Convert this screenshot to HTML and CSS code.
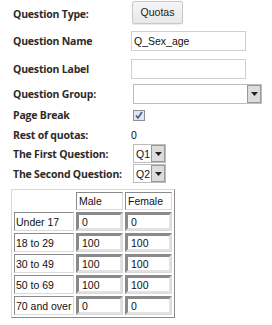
FILE: index.html
```html
<!DOCTYPE html>
<html>
<head>
<meta charset="utf-8">
<link rel="stylesheet" href="styles.css">
</head>
<body>
<div class="form">
  <div class="row r1"><span class="lbl">Question Type:</span><span class="ctl"><button class="btn">Quotas</button></span></div>
  <div class="row r2"><span class="lbl">Question Name</span><span class="ctl"><span class="txt">Q_Sex_age</span></span></div>
  <div class="row r3"><span class="lbl">Question Label</span><span class="ctl"><span class="txt"></span></span></div>
  <div class="row r4"><span class="lbl">Question Group:</span><span class="ctl"><span class="sel wide"><span class="val"></span><span class="arrow"><svg width="7" height="4" viewBox="0 0 7 4"><path d="M0 0H7L3.5 4Z" fill="#222"/></svg></span></span></span></div>
  <div class="row r5"><span class="lbl">Page Break</span><span class="ctl"><span class="chk"><svg width="10" height="9" viewBox="0 0 10 9"><path d="M2 4.5L4 7L8 1" stroke="#2a5fb0" stroke-width="1.6" fill="none"/></svg></span></span></div>
  <div class="row r6"><span class="lbl">Rest of quotas:</span><span class="ctl"><span class="num">0</span></span></div>
  <div class="row r7"><span class="lbl">The First Question:</span><span class="ctl"><span class="sel small"><span class="val">Q1</span><span class="arrow"><svg width="7" height="4" viewBox="0 0 7 4"><path d="M0 0H7L3.5 4Z" fill="#222"/></svg></span></span></span></div>
  <div class="row r8"><span class="lbl">The Second Question:</span><span class="ctl"><span class="sel small"><span class="val">Q2</span><span class="arrow"><svg width="7" height="4" viewBox="0 0 7 4"><path d="M0 0H7L3.5 4Z" fill="#222"/></svg></span></span></span></div>
</div>
<table class="quota">
  <tr><td class="empty"></td><td class="head">Male</td><td class="head">Female</td></tr>
  <tr><td class="name">Under 17</td><td><span class="cell">0</span></td><td><span class="cell">0</span></td></tr>
  <tr><td class="name">18 to 29</td><td><span class="cell">100</span></td><td><span class="cell">100</span></td></tr>
  <tr><td class="name">30 to 49</td><td><span class="cell">100</span></td><td><span class="cell">100</span></td></tr>
  <tr><td class="name">50 to 69</td><td><span class="cell">100</span></td><td><span class="cell">100</span></td></tr>
  <tr><td class="name">70 and over</td><td><span class="cell">0</span></td><td><span class="cell">0</span></td></tr>
</table>
</body>
</html>
```
FILE: styles.css
```css
html, body { margin: 0; padding: 0; background: #fff; }
body { font-family: "Liberation Sans", Arial, sans-serif; font-size: 10px; color: #111; }
.form { padding-left: 13px; width: 259px; }
.row { display: flex; align-items: center; }
.r1 { height: 27px; }
.r2 { height: 28px; }
.r3 { height: 27px; }
.r4 { height: 23px; }
.r5 { height: 20px; }
.r6 { height: 19px; }
.r7 { height: 19px; }
.r8 { height: 21px; }
.lbl { width: 118px; flex: none; font-family: "Open Sans", Lato, sans-serif; font-weight: 700; font-size: 10.5px; letter-spacing: -0.2px; color: #2e2a28; }
.ctl { display: flex; align-items: center; }
.btn { margin: -3px 0 0 1px; width: 51px; height: 23px; padding: 0; font: 10.5px "Liberation Sans", Arial, sans-serif; color: #222; background: linear-gradient(#f6f6f6, #e8e8e8); border: 1px solid #c8c8c8; border-radius: 2px; box-shadow: 0 1px 1px rgba(0,0,0,0.08); }
.txt { box-sizing: border-box; display: flex; align-items: center; width: 115px; height: 20px; padding-left: 2px; border: 1px solid #cfcfcf; font-size: 10.5px; color: #111; }
.sel { box-sizing: border-box; display: flex; align-items: stretch; border: 1px solid #bdbdbd; background: #fff; margin-left: 2px; }
.sel.wide { width: 129px; height: 20px; margin-left: 2px; }
.sel.small { width: 33px; height: 19px; }
.val { flex: 1; display: flex; align-items: center; padding-left: 2px; font-size: 10.5px; color: #111; }
.arrow { box-sizing: border-box; width: 14px; display: flex; align-items: center; justify-content: center; background: #dcdcdc; border: 1px solid; border-color: #f4f4f4 #7a7a7a #7a7a7a #f4f4f4; outline: 1px solid #9a9a9a; outline-offset: -1px; }
.chk { box-sizing: border-box; display: flex; align-items: center; justify-content: center; margin-left: 2px; width: 12px; height: 11px; border: 1px solid #8f8f8f; background: #e6e6e6; }
.num { margin-left: 0; font-size: 10.5px; color: #111; }
.quota { margin: 5px 0 0 11px; border: 1px solid; border-color: #d8d8d8 #8a8a8a #8a8a8a #d8d8d8; border-spacing: 2px; font-size: 10.5px; }
.quota td { padding: 0; border: 1px solid; border-color: #8a8a8a #dadada #dadada #8a8a8a; color: #111; }
.quota td.empty { border: none; }
.quota td.name { width: 57px; padding-left: 1px; white-space: nowrap; }
.quota td.head { padding-left: 2px; height: 16px; }
.cell { box-sizing: border-box; display: flex; align-items: center; width: 45px; height: 17px; padding-left: 3px; border: 2px solid; border-color: #8a8a8a #e2e2e2 #e2e2e2 #8a8a8a; }
```
